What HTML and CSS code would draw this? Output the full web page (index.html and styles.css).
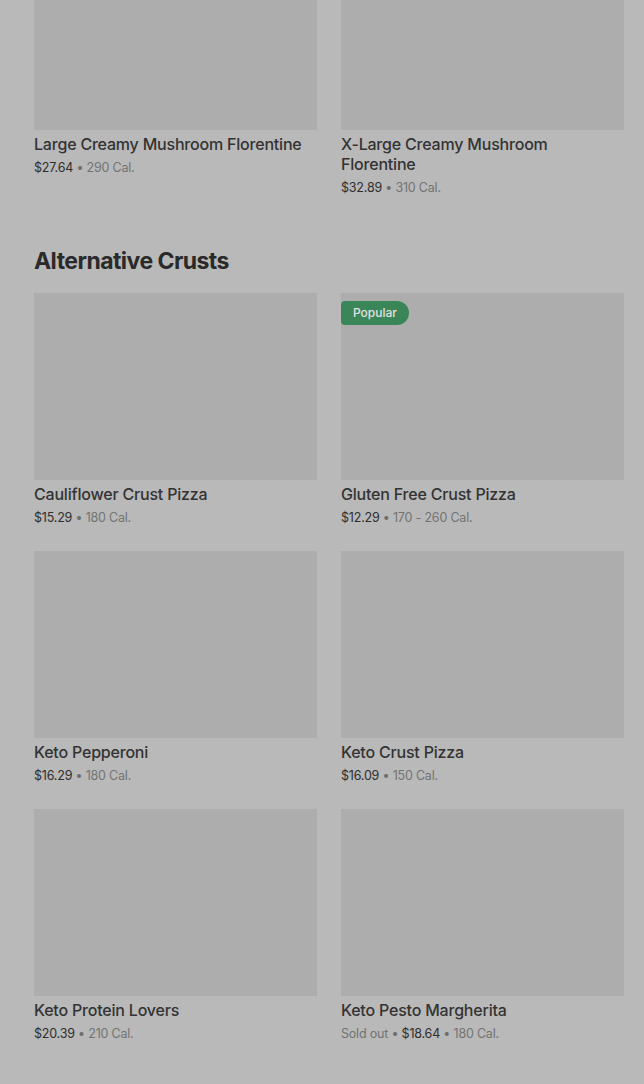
FILE: index.html
```html
<!DOCTYPE html>
<html>
<head>
<meta charset="utf-8">
<link rel="stylesheet" href="styles.css">
</head>
<body>
<main class="page">
  <section class="section first">
    <div class="grid">
      <div class="card">
        <div class="thumb"></div>
        <div class="title">Large Creamy Mushroom Florentine</div>
        <div class="meta"><span class="price">$27.64</span> • <span class="cal">290 Cal.</span></div>
      </div>
      <div class="card">
        <div class="thumb"></div>
        <div class="title">X-Large Creamy Mushroom Florentine</div>
        <div class="meta"><span class="price">$32.89</span> • <span class="cal">310 Cal.</span></div>
      </div>
    </div>
  </section>

  <section class="section">
    <h2 class="heading">Alternative Crusts</h2>
    <div class="grid">
      <div class="card">
        <div class="thumb"></div>
        <div class="title">Cauliflower Crust Pizza</div>
        <div class="meta"><span class="price">$15.29</span> • <span class="cal">180 Cal.</span></div>
      </div>
      <div class="card">
        <div class="thumb"><span class="badge">Popular</span></div>
        <div class="title">Gluten Free Crust Pizza</div>
        <div class="meta"><span class="price">$12.29</span> • <span class="cal">170 - 260 Cal.</span></div>
      </div>
      <div class="card">
        <div class="thumb"></div>
        <div class="title">Keto Pepperoni</div>
        <div class="meta"><span class="price">$16.29</span> • <span class="cal">180 Cal.</span></div>
      </div>
      <div class="card">
        <div class="thumb"></div>
        <div class="title">Keto Crust Pizza</div>
        <div class="meta"><span class="price">$16.09</span> • <span class="cal">150 Cal.</span></div>
      </div>
      <div class="card">
        <div class="thumb"></div>
        <div class="title">Keto Protein Lovers</div>
        <div class="meta"><span class="price">$20.39</span> • <span class="cal">210 Cal.</span></div>
      </div>
      <div class="card">
        <div class="thumb"></div>
        <div class="title">Keto Pesto Margherita</div>
        <div class="meta"><span class="cal">Sold out</span> • <span class="price">$18.64</span> • <span class="cal">180 Cal.</span></div>
      </div>
    </div>
  </section>
</main>
</body>
</html>
```

FILE: styles.css
```css
html, body {
  margin: 0;
  padding: 0;
  background: #b9b9b9;
  overflow: hidden;
}

body {
  font-family: Inter, "Noto Sans", "Liberation Sans", sans-serif;
  color: #2e2e2e;
  height: 1084px;
}

.page {
  padding: 0 20px 0 34px;
}

.section.first {
  margin-top: -57px;
}

.section {
  margin-top: 47px;
}

.heading {
  margin: 0 0 16px 0;
  font-size: 23px;
  line-height: 32px;
  font-weight: 700;
  color: #2a2a2a;
  letter-spacing: -0.55px;
}

.grid {
  display: grid;
  grid-template-columns: 1fr 1fr;
  column-gap: 24px;
  row-gap: 23px;
}

.card {
  display: flex;
  flex-direction: column;
}

.thumb {
  position: relative;
  height: 187px;
  background: #adadad;
}

.badge {
  position: absolute;
  left: 0;
  top: 8px;
  height: 24px;
  line-height: 24px;
  padding: 0 12px;
  background: #3b8658;
  color: #e2e2e2;
  font-size: 12px;
  font-weight: 500;
  border-radius: 4px 12px 12px 4px;
}

.title {
  margin-top: 4px;
  font-size: 16px;
  line-height: 20px;
  font-weight: 500;
  color: #333333;
  letter-spacing: -0.2px;
}

.meta {
  margin-top: 4px;
  font-size: 12.5px;
  line-height: 20px;
  color: #6e6e6e;
  letter-spacing: -0.2px;
}

.price {
  color: #2e2e2e;
}

.cal {
  color: #737373;
}
```
